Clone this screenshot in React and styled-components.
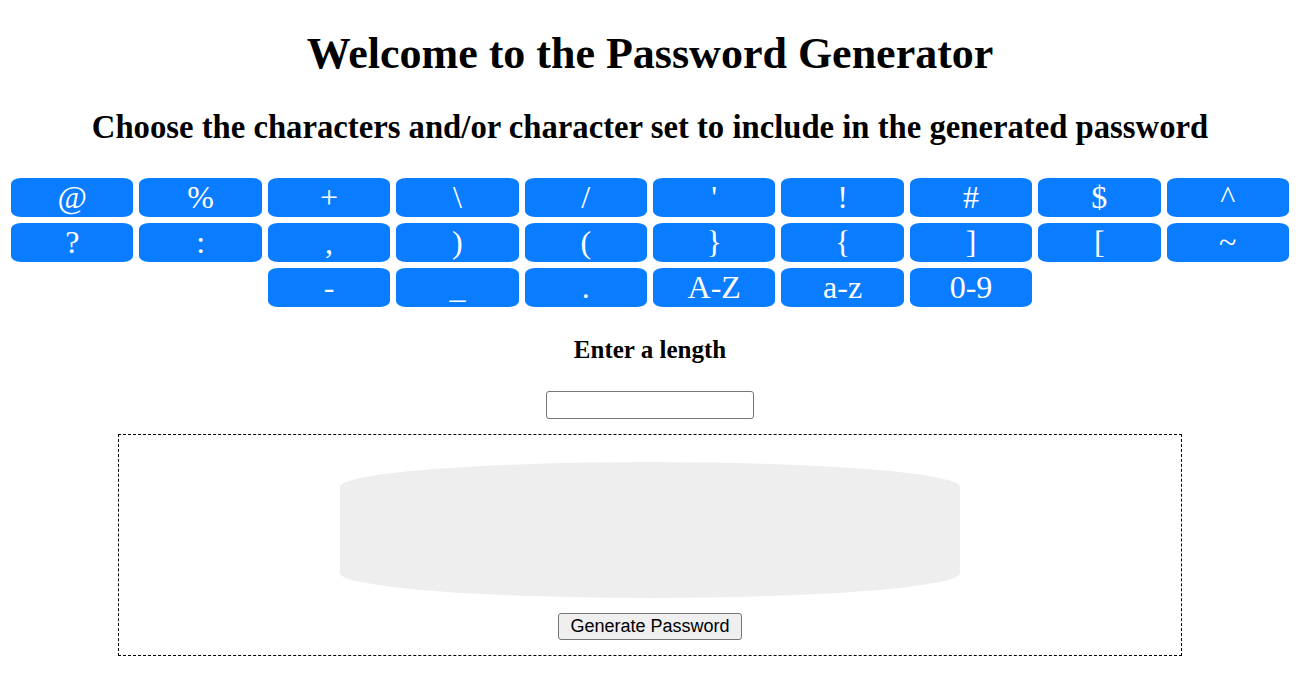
import styled, { createGlobalStyle } from 'styled-components';

const GlobalStyle = createGlobalStyle`
  body {
    margin: 8px;
    background: #fff;
    font-family: "Liberation Serif", "Times New Roman", serif;
    color: #000;
  }
`;

const Page = styled.div`
  display: flex;
  flex-direction: column;
  align-items: center;
`;

const Title = styled.h1`
  font-size: 44px;
  line-height: 50px;
  margin: 21px 0 0 0;
  text-align: center;
`;

const Subtitle = styled.h2`
  font-size: 32.7px;
  line-height: 38px;
  margin: 29px 0 0 0;
  text-align: center;
`;

const Keys = styled.div`
  display: flex;
  flex-wrap: wrap;
  justify-content: center;
  width: 100%;
  margin-top: 29px;
`;

const Key = styled.button`
  width: calc(10% - 6px);
  height: 39px;
  margin: 3px;
  padding: 0;
  border: none;
  border-radius: 10px / 6px;
  background: #0a7cff;
  color: #fff;
  font-family: "Liberation Serif", "Times New Roman", serif;
  font-size: 32px;
  line-height: 39px;
  cursor: pointer;
`;

const Label = styled.h3`
  font-size: 25px;
  line-height: 30px;
  margin: 25px 0 0 0;
`;

const LengthInput = styled.input`
  width: 202px;
  height: 26px;
  margin-top: 26px;
  padding: 0 2px;
  border: 1px solid #767676;
  border-radius: 3px;
  box-sizing: content-box;
`;

const Output = styled.div`
  width: 1062px;
  margin-top: 15px;
  border: 1px dashed #000;
  display: flex;
  flex-direction: column;
  align-items: center;
  padding: 27px 0 15px;
`;

const Result = styled.div`
  width: 620px;
  height: 136px;
  background: #eee;
  border-radius: 50% / 25px;
`;

const GenerateButton = styled.button`
  height: 27px;
  margin-top: 15px;
  padding: 0 11px;
  font-family: "Liberation Sans", Arial, sans-serif;
  font-size: 18px;
  background: #efefef;
  border: 1px solid #767676;
  border-radius: 3px;
  color: #000;
`;

const keys = [
  '@', '%', '+', '\\', '/', "'", '!', '#', '$', '^',
  '?', ':', ',', ')', '(', '}', '{', ']', '[', '~',
  '-', '_', '.', 'A-Z', 'a-z', '0-9',
];

export default function App() {
  return (
    <>
      <GlobalStyle />
      <Page>
        <Title>Welcome to the Password Generator</Title>
        <Subtitle>Choose the characters and/or character set to include in the generated password</Subtitle>
        <Keys>
          {keys.map((k) => (
            <Key key={k}>{k}</Key>
          ))}
        </Keys>
        <Label>Enter a length</Label>
        <LengthInput type="text" />
        <Output>
          <Result />
          <GenerateButton>Generate Password</GenerateButton>
        </Output>
      </Page>
    </>
  );
}
